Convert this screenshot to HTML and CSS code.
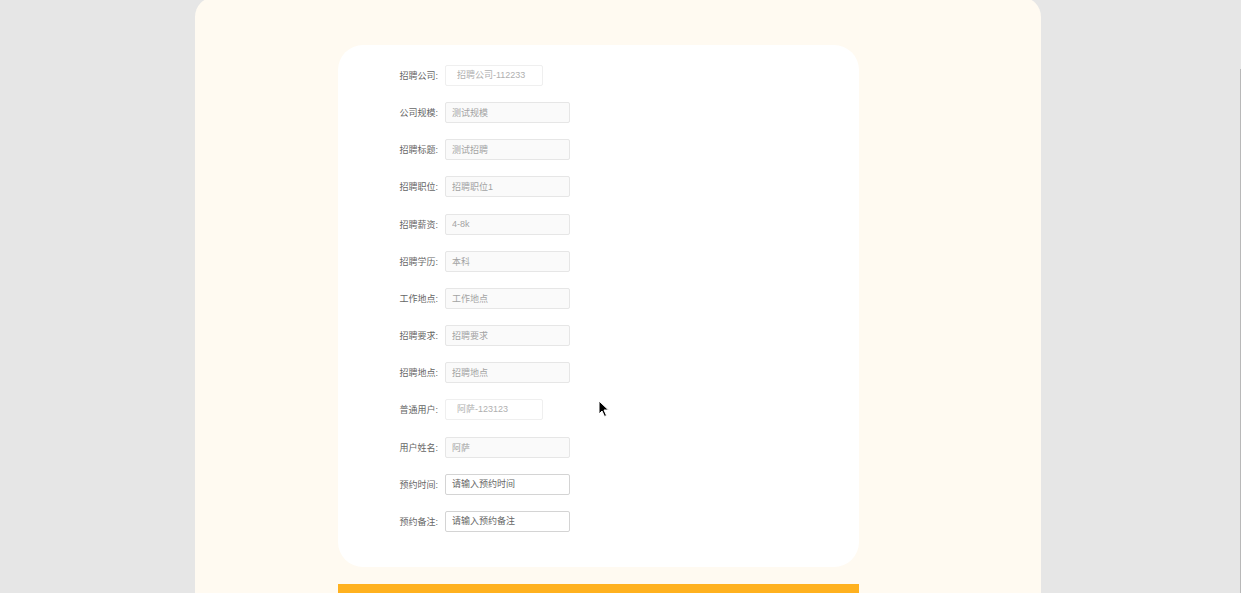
FILE: index.html
```html
<!DOCTYPE html>
<html lang="zh-CN">
<head>
    <meta charset="UTF-8">
    <meta name="viewport" content="width=device-width, initial-scale=1.0">
    <title>预约面试</title>
    <link rel="stylesheet" href="styles.css">
</head>
<body>

    <!-- 外层面板 -->
    <div class="panel">
        <!-- 表单卡片 -->
        <div class="card">
            <div class="form-row">
                <label>招聘公司:</label>
                <div class="select-box">招聘公司-112233</div>
            </div>
            <div class="form-row">
                <label>公司规模:</label>
                <input class="field" type="text" value="测试规模" disabled>
            </div>
            <div class="form-row">
                <label>招聘标题:</label>
                <input class="field" type="text" value="测试招聘" disabled>
            </div>
            <div class="form-row">
                <label>招聘职位:</label>
                <input class="field" type="text" value="招聘职位1" disabled>
            </div>
            <div class="form-row">
                <label>招聘薪资:</label>
                <input class="field" type="text" value="4-8k" disabled>
            </div>
            <div class="form-row">
                <label>招聘学历:</label>
                <input class="field" type="text" value="本科" disabled>
            </div>
            <div class="form-row">
                <label>工作地点:</label>
                <input class="field" type="text" value="工作地点" disabled>
            </div>
            <div class="form-row">
                <label>招聘要求:</label>
                <input class="field" type="text" value="招聘要求" disabled>
            </div>
            <div class="form-row">
                <label>招聘地点:</label>
                <input class="field" type="text" value="招聘地点" disabled>
            </div>
            <div class="form-row">
                <label>普通用户:</label>
                <div class="select-box">阿萨-123123</div>
            </div>
            <div class="form-row">
                <label>用户姓名:</label>
                <input class="field" type="text" value="阿萨" disabled>
            </div>
            <div class="form-row">
                <label>预约时间:</label>
                <input class="field editable" type="text" placeholder="请输入预约时间">
            </div>
            <div class="form-row">
                <label>预约备注:</label>
                <input class="field editable" type="text" placeholder="请输入预约备注">
            </div>
        </div>

        <!-- 提交按钮 -->
        <div class="submit-bar"></div>
    </div>

    <!-- 鼠标指针 -->
    <svg class="cursor" width="12" height="18" viewBox="0 0 12 18">
        <path d="M1 1 L1 14 L4 11 L6.5 16.5 L8.5 15.5 L6 10 L10.5 10 Z" fill="#000" stroke="#fff" stroke-width="1"/>
    </svg>

    <div class="scroll-thumb"></div>
</body>
</html>
```

FILE: styles.css
```css
/* 基础样式 */
html, body {
    margin: 0;
    padding: 0;
    height: 100%;
    overflow: hidden;
    background-color: #e6e6e6;
    font-family: "Liberation Sans", "Noto Sans CJK SC", sans-serif;
}
.panel {
    width: 846px;
    margin: -3px 0 0 195px;
    padding: 48px 0 0 143px;
    box-sizing: border-box;
    min-height: 620px;
    background-color: #fffaf1;
    border-radius: 20px 20px 0 0;
}
/* 表单卡片 */
.card {
    width: 521px;
    box-sizing: border-box;
    padding: 20px 0 35px 0;
    background-color: #fff;
    border-radius: 25px;
    display: flex;
    flex-direction: column;
    gap: 16.17px;
}
.form-row {
    display: grid;
    grid-template-columns: 100px auto;
    column-gap: 7px;
    align-items: center;
    height: 21px;
}
.form-row label {
    text-align: right;
    font-size: 9px;
    color: #666;
}
.field {
    width: 125px;
    height: 21px;
    box-sizing: border-box;
    margin: 0;
    padding: 0 6px;
    font-family: inherit;
    font-size: 9px;
    color: #a3a3a3;
    background-color: #fafafa;
    border: 1px solid #e6e6e6;
    border-radius: 2px;
    outline: none;
}
.field.editable {
    background-color: #fff;
    border-color: #d4d4d4;
    color: #333;
}
.field.editable::placeholder {
    color: #666;
}
.select-box {
    width: 98px;
    height: 21px;
    box-sizing: border-box;
    padding-left: 11px;
    line-height: 19px;
    font-size: 9px;
    color: #b0b0b0;
    background-color: #fff;
    border: 1px solid #efefef;
    border-radius: 2px;
}
/* 提交按钮 */
.submit-bar {
    width: 521px;
    height: 20px;
    margin-top: 17px;
    background-color: #ffb11f;
}
.cursor {
    position: absolute;
    left: 598px;
    top: 400px;
}
.scroll-thumb {
    position: absolute;
    right: 0;
    top: 69px;
    width: 1px;
    height: 530px;
    background-color: #b8b8b8;
}
```
